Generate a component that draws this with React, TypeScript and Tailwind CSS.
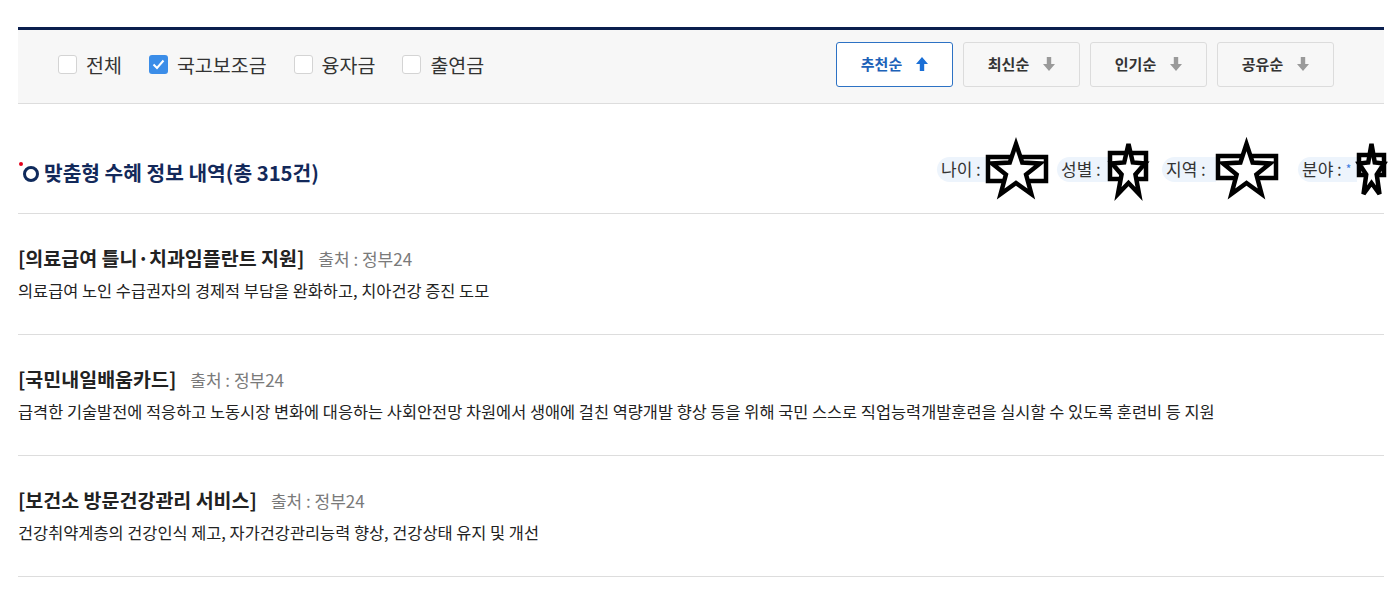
import React from "react"

const font = { fontFamily: '"Noto Sans CJK KR", "Noto Sans", sans-serif' }

// filter checkboxes in the grey bar
const filters = [
  { label: "전체", checked: false },
  { label: "국고보조금", checked: true },
  { label: "융자금", checked: false },
  { label: "출연금", checked: false },
]

const sorts = [
  { label: "추천순", active: true },
  { label: "최신순", active: false },
  { label: "인기순", active: false },
  { label: "공유순", active: false },
]

const items = [
  {
    title: "[의료급여 틀니·치과임플란트 지원]",
    desc: "의료급여 노인 수급권자의 경제적 부담을 완화하고, 치아건강 증진 도모",
  },
  {
    title: "[국민내일배움카드]",
    desc: "급격한 기술발전에 적응하고 노동시장 변화에 대응하는 사회안전망 차원에서 생애에 걸친 역량개발 향상 등을 위해 국민 스스로 직업능력개발훈련을 실시할 수 있도록 훈련비 등 지원",
  },
  {
    title: "[보건소 방문건강관리 서비스]",
    desc: "건강취약계층의 건강인식 제고, 자가건강관리능력 향상, 건강상태 유지 및 개선",
  },
]

function Arrow({ up, color }: { up: boolean; color: string }) {
  return (
    <svg width="12" height="14" viewBox="0 0 12 14" className={up ? "" : "rotate-180"}>
      <path d="M6 0 L12 7 L8.2 7 L8.2 14 L3.8 14 L3.8 7 L0 7 Z" fill={color} />
    </svg>
  )
}

// the broken star glyphs next to each tag
function StarBox({ w, rectTop, rectH, starX, starW }: { w: number; rectTop: number; rectH: number; starX: number; starW: number }) {
  const pts = [
    [0.5, 0], [0.63, 0.37], [1, 0.39], [0.71, 0.61], [0.82, 1],
    [0.5, 0.78], [0.18, 1], [0.29, 0.61], [0, 0.39], [0.37, 0.37],
  ]
  const h = 54
  const poly = pts.map(([x, y]) => `${starX + 2 + x * (starW - 4)},${2 + y * (h - 4)}`).join(" ")
  return (
    <svg width={w} height={h} className="shrink-0 overflow-visible -my-3">
      <rect x="2" y={rectTop} width={w - 4} height={rectH} fill="white" stroke="black" strokeWidth="4.5" />
      <polygon points={poly} fill="white" stroke="black" strokeWidth="4.5" strokeLinejoin="miter" />
    </svg>
  )
}

function Tag({ label, width, children, extra }: { label: string; width: string; children: React.ReactNode; extra?: boolean }) {
  return (
    <div className="flex items-center">
      <span className={`${width} bg-[#edf4fc] rounded-l-full pl-[4px] h-[25px] flex items-center text-[17px] text-[#333] whitespace-nowrap`}>
        {label}
        {extra && <span className="text-[#3a7be0] ml-[4px] text-[12px]">*</span>}
      </span>
      {children}
    </div>
  )
}

export default function App() {
  return (
    <div className="w-[1394px] h-[598px] bg-white pl-[18px] pr-[10px] pt-[27px] overflow-hidden" style={font}>
      {/* filter bar */}
      <div className="border-t-[3px] border-[#0b1f4e] bg-[#f7f7f7] border-b border-b-[#dddddd] h-[77px] flex items-center justify-between pb-[5px]">
        <div className="flex items-center pl-[40px] pt-[1px]">
          {filters.map((f) => (
            <label key={f.label} className="flex items-center mr-[27px]">
              {f.checked ? (
                <span className="w-[19px] h-[19px] rounded-[3px] bg-[#3b8de8] flex items-center justify-center">
                  <svg width="13" height="11" viewBox="0 0 13 11">
                    <path d="M1.5 5.5 L5 9 L11.5 1.5" stroke="white" strokeWidth="2" fill="none" />
                  </svg>
                </span>
              ) : (
                <span className="w-[19px] h-[19px] rounded-[3px] bg-white border border-[#d4d4d4]" />
              )}
              <span className="ml-[9px] text-[19.5px] text-[#333]">{f.label}</span>
            </label>
          ))}
        </div>
        <div className="flex items-center gap-[10px] pr-[50px]">
          {sorts.map((s) => (
            <button
              key={s.label}
              className={
                s.active
                  ? "w-[117px] h-[45px] rounded-[3px] border border-[#2d72c4] bg-white flex items-center justify-center gap-[14px] text-[15px] font-bold text-[#1d62b8]"
                  : "w-[117px] h-[45px] rounded-[3px] border border-[#dcdcdc] bg-[#f7f7f7] flex items-center justify-center gap-[14px] text-[15px] font-bold text-[#333]"
              }
            >
              {s.label}
              <Arrow up={s.active} color={s.active ? "#1a6fd6" : "#9a9a9a"} />
            </button>
          ))}
        </div>
      </div>

      {/* title row */}
      <div className="h-[110px] border-b border-[#dddddd] flex items-center justify-between pt-[28px]">
        <div className="flex items-center">
          <span className="relative w-[16px] h-[16px] rounded-full border-[3px] border-[#0f2a5c] ml-[5px] mt-[2px]">
            <span className="absolute left-[-7px] top-[-7px] w-[4px] h-[4px] rounded-full bg-[#e3001b]" />
          </span>
          <h2 className="ml-[5px] text-[20.3px] font-bold text-[#13295a]">맞춤형 수혜 정보 내역(총 315건)</h2>
        </div>
        <div className="flex items-center mt-[-7px] mr-[-2px]">
          <Tag label="나이 :" width="w-[49px]">
            <StarBox w={62} rectTop={15} rectH={24} starX={4} starW={52} />
          </Tag>
          <div className="w-[9px]" />
          <Tag label="성별 :" width="w-[51px]">
            <StarBox w={40} rectTop={11} rectH={26} starX={2} starW={37} />
          </Tag>
          <div className="w-[14px]" />
          <Tag label="지역 :" width="w-[54px]">
            <StarBox w={62} rectTop={14} rectH={22} starX={5} starW={51} />
          </Tag>
          <div className="w-[20px]" />
          <Tag label="분야 :" width="w-[59px]" extra>
            <StarBox w={29} rectTop={13} rectH={20} starX={0} starW={29} />
          </Tag>
        </div>
      </div>

      {/* list */}
      {items.map((it) => (
        <div key={it.title} className="h-[121px] border-b border-[#dddddd] pt-[30px]">
          <div className="flex items-baseline leading-[28px]">
            <span className="text-[19.5px] font-bold text-[#222]">{it.title}</span>
            <span className="ml-[14px] text-[17px] text-[#7a7a7a]">출처 : 정부24</span>
          </div>
          <p className="mt-[5px] leading-[24px] text-[16.4px] text-[#222]">{it.desc}</p>
        </div>
      ))}
    </div>
  )
}
